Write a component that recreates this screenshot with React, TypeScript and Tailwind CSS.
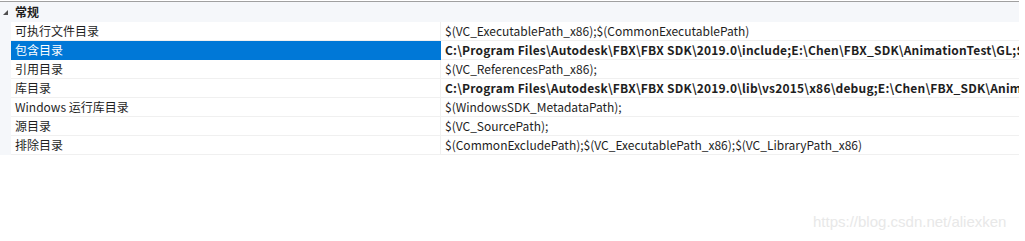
const rows: { label: string; value: string; bold?: boolean; selected?: boolean }[] = [
  { label: '可执行文件目录', value: '$(VC_ExecutablePath_x86);$(CommonExecutablePath)' },
  {
    label: '包含目录',
    value: 'C:\\Program Files\\Autodesk\\FBX\\FBX SDK\\2019.0\\include;E:\\Chen\\FBX_SDK\\AnimationTest\\GL;$(VC_IncludePath);$(WindowsSDK_IncludePath);',
    bold: true,
    selected: true,
  },
  { label: '引用目录', value: '$(VC_ReferencesPath_x86);' },
  {
    label: '库目录',
    value: 'C:\\Program Files\\Autodesk\\FBX\\FBX SDK\\2019.0\\lib\\vs2015\\x86\\debug;E:\\Chen\\FBX_SDK\\AnimationTest\\GL;$(LibraryPath)',
    bold: true,
  },
  { label: 'Windows 运行库目录', value: '$(WindowsSDK_MetadataPath);' },
  { label: '源目录', value: '$(VC_SourcePath);' },
  { label: '排除目录', value: '$(CommonExcludePath);$(VC_ExecutablePath_x86);$(VC_LibraryPath_x86)' },
];

export default function App() {
  return (
    <div
      className="relative w-[1025px] h-[241px] bg-white overflow-hidden text-[12px] text-[#1e1e1e]"
      style={{ fontFamily: '"Noto Sans CJK SC", "Noto Sans", sans-serif' }}
    >
      <div className="w-[1019px] border-t border-[#a0a0a0] mt-px">
        {/* category header */}
        <div className="flex h-[20px] bg-[#f5f7fa] items-center">
          <div className="w-[11px] flex items-center justify-center">
            <svg width="7" height="7" viewBox="0 0 7 7">
              <path d="M6 1 L6 6 L1 6 Z" fill="#505050" />
            </svg>
          </div>
          <span className="pl-[4px] font-bold leading-none">常规</span>
        </div>
        {rows.map((r) => (
          <div key={r.label} className="flex h-[19px]">
            <div className="w-[11px] bg-[#f5f7fa]" />
            <div
              className={
                r.selected
                  ? 'w-[430px] bg-[#0078d7] text-white flex items-center pl-[4px] border-b border-[#0078d7]'
                  : 'w-[430px] flex items-center pl-[4px] border-b border-r border-[#f0f0f0]'
              }
            >
              <span className="leading-none">{r.label}</span>
            </div>
            <div className="flex-1 flex items-center pl-[4px] border-b border-[#f0f0f0] overflow-hidden whitespace-nowrap">
              <span className={r.bold ? 'font-bold leading-none tracking-[0.2px]' : 'leading-none'}>{r.value}</span>
            </div>
          </div>
        ))}
      </div>
      <div
        className="absolute left-[813px] top-[211px] text-[15px] text-[#e8e8e8]"
        style={{ fontFamily: '"Liberation Sans", Arial, sans-serif' }}
      >
        https://blog.csdn.net/aliexken
      </div>
    </div>
  );
}
